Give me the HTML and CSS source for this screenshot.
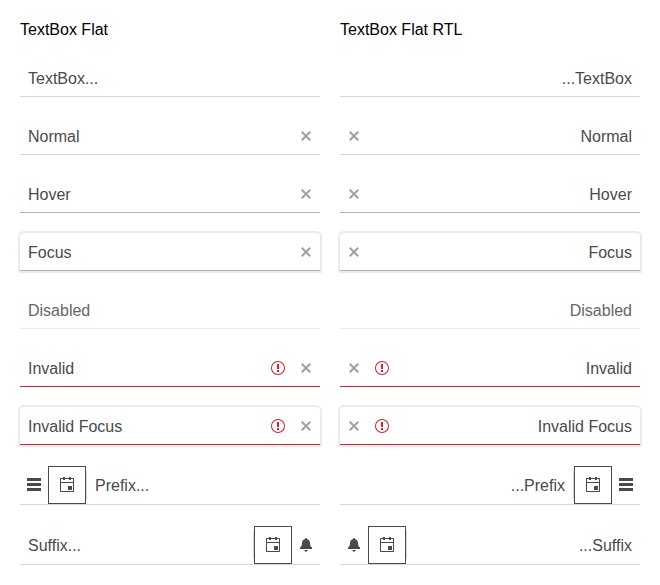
FILE: index.html
```html
<!DOCTYPE html>
<html lang="en">
<head>
<meta charset="utf-8">
<title>TextBox Flat</title>
<link rel="stylesheet" href="styles.css">
</head>
<body>
<svg class="symbols" width="0" height="0" aria-hidden="true">
  <symbol id="x" viewBox="0 0 16 16"><path d="M13 4.5 11.5 3 8 6.5 4.5 3 3 4.5 6.5 8 3 11.5 4.5 13 8 9.5l3.5 3.5 1.5-1.5L9.5 8z"/></symbol>
  <symbol id="error" viewBox="0 0 16 16"><path d="M8 2a6 6 0 1 1 0 12A6 6 0 0 1 8 2m0-1a7 7 0 1 0 0 14A7 7 0 0 0 8 1M7 4h2v5H7zm0 6h2v2H7z"/></symbol>
  <symbol id="menu" viewBox="0 0 16 16"><path d="M1 1h14v3H1zm0 5h14v3H1zm0 5h14v3H1z"/></symbol>
  <symbol id="calendar" viewBox="0 0 16 16"><path fill-rule="evenodd" d="M4 0h2v1h4V0h2v1h2.500l.5.500v13l-.5.500h-13L1 14.500v-13L1.500 1H4zM2 2v3h12V2h-2v1h-2V2H6v1H4V2zm0 4v8h12V6zm7 3h4v4H9z"/></symbol>
  <symbol id="bell" viewBox="0 0 16 16"><path d="M6.300 13h3.400a1.700 1.700 0 0 1-3.400 0M14 12H2v-1.500C3.500 9.500 4 8.500 4 6c0-2 1-3.300 3-4a1 1 0 0 1 2 0c2 .7 3 2 3 4 0 2.500.5 3.500 2 4.500z"/></symbol>
</svg>
<main class="columns">
  <section class="column">
    <h1 class="title">TextBox Flat</h1>
    <div class="textbox"><span class="value">TextBox...</span></div>
    <div class="textbox"><span class="value">Normal</span><svg class="icon clear"><use href="#x"/></svg></div>
    <div class="textbox hover"><span class="value">Hover</span><svg class="icon clear"><use href="#x"/></svg></div>
    <div class="textbox hover focus"><span class="value">Focus</span><svg class="icon clear"><use href="#x"/></svg></div>
    <div class="textbox disabled"><span class="value">Disabled</span></div>
    <div class="textbox invalid"><span class="value">Invalid</span><svg class="icon error"><use href="#error"/></svg><svg class="icon clear"><use href="#x"/></svg></div>
    <div class="textbox invalid focus"><span class="value">Invalid Focus</span><svg class="icon error"><use href="#error"/></svg><svg class="icon clear"><use href="#x"/></svg></div>
    <div class="textbox"><svg class="icon adornment"><use href="#menu"/></svg><span class="button"><svg class="icon"><use href="#calendar"/></svg></span><span class="separator"></span><span class="value">Prefix...</span></div>
    <div class="textbox"><span class="value">Suffix...</span><span class="separator"></span><span class="button"><svg class="icon"><use href="#calendar"/></svg></span><svg class="icon adornment"><use href="#bell"/></svg></div>
  </section>
  <section class="column">
    <h1 class="title">TextBox Flat RTL</h1>
    <div class="textbox" dir="rtl"><span class="value">TextBox...</span></div>
    <div class="textbox" dir="rtl"><span class="value">Normal</span><svg class="icon clear"><use href="#x"/></svg></div>
    <div class="textbox hover" dir="rtl"><span class="value">Hover</span><svg class="icon clear"><use href="#x"/></svg></div>
    <div class="textbox hover focus" dir="rtl"><span class="value">Focus</span><svg class="icon clear"><use href="#x"/></svg></div>
    <div class="textbox disabled" dir="rtl"><span class="value">Disabled</span></div>
    <div class="textbox invalid" dir="rtl"><span class="value">Invalid</span><svg class="icon error"><use href="#error"/></svg><svg class="icon clear"><use href="#x"/></svg></div>
    <div class="textbox invalid focus" dir="rtl"><span class="value">Invalid Focus</span><svg class="icon error"><use href="#error"/></svg><svg class="icon clear"><use href="#x"/></svg></div>
    <div class="textbox" dir="rtl"><svg class="icon adornment"><use href="#menu"/></svg><span class="button"><svg class="icon"><use href="#calendar"/></svg></span><span class="separator"></span><span class="value">Prefix...</span></div>
    <div class="textbox" dir="rtl"><span class="value">Suffix...</span><span class="separator"></span><span class="button"><svg class="icon"><use href="#calendar"/></svg></span><svg class="icon adornment"><use href="#bell"/></svg></div>
  </section>
</main>
</body>
</html>
```

FILE: styles.css
```css
* {
  box-sizing: border-box;
}

body {
  margin: 0;
  padding: 20px;
  background: #fff;
  color: #000;
  font: 16px/19px "Liberation Sans", Arial, sans-serif;
}

.symbols {
  position: absolute;
}

.columns {
  display: grid;
  grid-template-columns: 300px 300px;
  gap: 20px;
}

.column {
  display: flex;
  flex-direction: column;
  gap: 20px;
}

.title {
  margin: 0;
  font-size: 16px;
  font-weight: 400;
}

.textbox {
  display: flex;
  align-items: center;
  min-height: 38px;
  border-top: 1px solid transparent;
  border-bottom: 1px solid #d6d6d6;
  color: #4a4a4a;
}

.hover {
  border-bottom-color: #b3b3b3;
}

.focus {
  border-radius: 4px 4px 0 0;
  box-shadow: 0 0 0 2px #ebebeb;
}

.disabled {
  border-bottom-color: #ebebeb;
  color: #666;
}

.invalid {
  border-bottom-color: #ce202e;
}

.value {
  flex: 1;
  padding: 0 8px;
}

.icon {
  display: block;
  flex: none;
  width: 16px;
  height: 16px;
  fill: currentColor;
}

.clear {
  margin: 0 6px;
  opacity: 0.5;
}

.error {
  margin: 0 6px;
  margin-inline-end: 0;
  color: #ce202e;
}

.error + .clear {
  margin: 0 6px;
  margin-inline-start: 12px;
}

.adornment {
  margin: 0 6px;
}

.button {
  display: flex;
  padding: 10px;
  border: 1px solid #4a4a4a;
}

.separator {
  width: 1px;
  height: 28px;
  background: #d6d6d6;
}
```
